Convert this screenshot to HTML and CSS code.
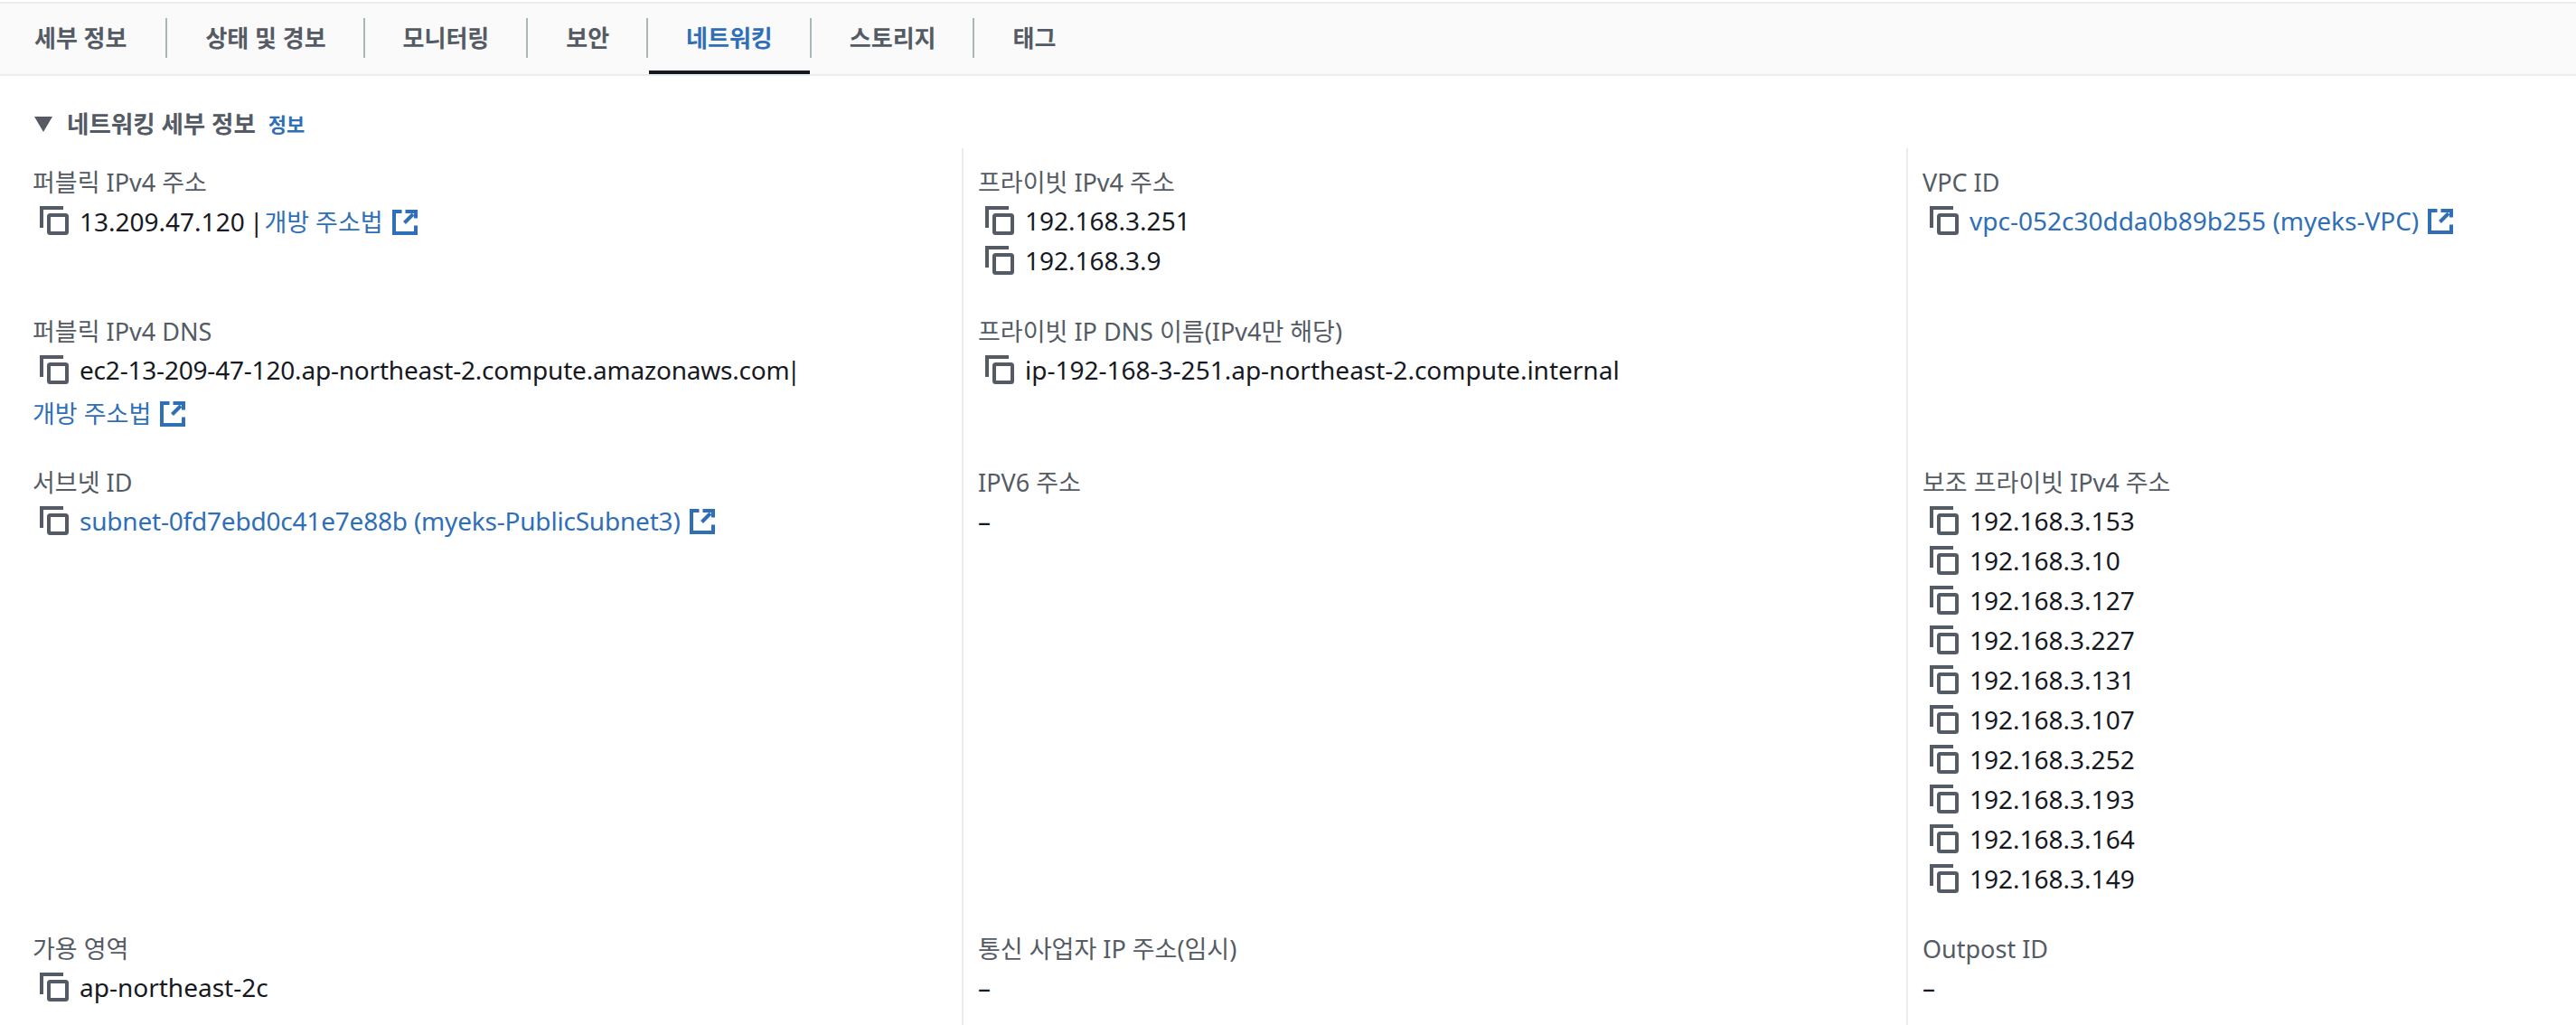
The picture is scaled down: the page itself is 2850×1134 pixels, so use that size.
FILE: index.html
```html
<!DOCTYPE html>
<html lang="ko">
<head>
<meta charset="utf-8">
<title>네트워킹</title>
<link rel="stylesheet" href="styles.css">
</head>
<body>
<svg class="defs" width="0" height="0" aria-hidden="true">
  <symbol id="copy" viewBox="0 0 32 32">
    <path d="M2 24V2H26" fill="none" stroke="#545b64" stroke-width="4"/>
    <rect x="10" y="10" width="20" height="20" rx="1.5" fill="none" stroke="#545b64" stroke-width="4"/>
  </symbol>
  <symbol id="ext" viewBox="0 0 28 28">
    <path d="M10.5 2H2V26H26V17.5M14.5 2H26V9.5" fill="none" stroke="#2f6fb7" stroke-width="4"/>
    <path d="M13.5 14.5L23 5" fill="none" stroke="#2f6fb7" stroke-width="4"/>
  </symbol>
</svg>
<nav class="tabs">
  <a class="tab first"><span class="tab-label">세부 정보</span></a>
  <a class="tab"><span class="tab-label">상태 및 경보</span></a>
  <a class="tab"><span class="tab-label">모니터링</span></a>
  <a class="tab"><span class="tab-label">보안</span></a>
  <a class="tab active"><span class="tab-label">네트워킹</span></a>
  <a class="tab"><span class="tab-label">스토리지</span></a>
  <a class="tab last"><span class="tab-label">태그</span></a>
</nav>
<section class="panel">
  <h2 class="heading"><span class="caret"></span><span>네트워킹 세부 정보</span><a class="info">정보</a></h2>
  <div class="grid">
    <div class="cell">
      <div class="label">퍼블릭 IPv4 주소</div>
      <div class="value"><svg class="copy"><use href="#copy"/></svg><span>13.209.47.120 <span class="sep">|</span><a class="link ko">개방 주소법<svg class="ext"><use href="#ext"/></svg></a></span></div>
    </div>
    <div class="cell">
      <div class="label">프라이빗 IPv4 주소</div>
      <div class="value"><svg class="copy"><use href="#copy"/></svg><span>192.168.3.251</span></div>
      <div class="value"><svg class="copy"><use href="#copy"/></svg><span>192.168.3.9</span></div>
    </div>
    <div class="cell">
      <div class="label">VPC ID</div>
      <div class="value"><svg class="copy"><use href="#copy"/></svg><a class="link">vpc-052c30dda0b89b255 (myeks-VPC)<svg class="ext"><use href="#ext"/></svg></a></div>
    </div>

    <div class="cell">
      <div class="label">퍼블릭 IPv4 DNS</div>
      <div class="value"><svg class="copy"><use href="#copy"/></svg><span class="tight">ec2-13-209-47-120.ap-northeast-2.compute.amazonaws.com<span class="pipe">|</span></span></div>
      <div class="value plain tall"><a class="link ko">개방 주소법<svg class="ext"><use href="#ext"/></svg></a></div>
    </div>
    <div class="cell">
      <div class="label">프라이빗 IP DNS 이름(IPv4만 해당)</div>
      <div class="value"><svg class="copy"><use href="#copy"/></svg><span>ip-192-168-3-251.ap-northeast-2.compute.internal</span></div>
    </div>
    <div class="cell"></div>

    <div class="cell">
      <div class="label">서브넷 ID</div>
      <div class="value"><svg class="copy"><use href="#copy"/></svg><a class="link tight">subnet-0fd7ebd0c41e7e88b (myeks-PublicSubnet3)<svg class="ext"><use href="#ext"/></svg></a></div>
    </div>
    <div class="cell">
      <div class="label">IPV6 주소</div>
      <div class="value plain">–</div>
    </div>
    <div class="cell">
      <div class="label">보조 프라이빗 IPv4 주소</div>
      <div class="value"><svg class="copy"><use href="#copy"/></svg><span>192.168.3.153</span></div>
      <div class="value"><svg class="copy"><use href="#copy"/></svg><span>192.168.3.10</span></div>
      <div class="value"><svg class="copy"><use href="#copy"/></svg><span>192.168.3.127</span></div>
      <div class="value"><svg class="copy"><use href="#copy"/></svg><span>192.168.3.227</span></div>
      <div class="value"><svg class="copy"><use href="#copy"/></svg><span>192.168.3.131</span></div>
      <div class="value"><svg class="copy"><use href="#copy"/></svg><span>192.168.3.107</span></div>
      <div class="value"><svg class="copy"><use href="#copy"/></svg><span>192.168.3.252</span></div>
      <div class="value"><svg class="copy"><use href="#copy"/></svg><span>192.168.3.193</span></div>
      <div class="value"><svg class="copy"><use href="#copy"/></svg><span>192.168.3.164</span></div>
      <div class="value"><svg class="copy"><use href="#copy"/></svg><span>192.168.3.149</span></div>
    </div>

    <div class="cell">
      <div class="label">가용 영역</div>
      <div class="value"><svg class="copy"><use href="#copy"/></svg><span>ap-northeast-2c</span></div>
    </div>
    <div class="cell">
      <div class="label">통신 사업자 IP 주소(임시)</div>
      <div class="value plain">–</div>
    </div>
    <div class="cell">
      <div class="label">Outpost ID</div>
      <div class="value plain">–</div>
    </div>
  </div>
</section>
</body>
</html>
```

FILE: styles.css
```css
* { box-sizing: border-box; }
html, body { margin: 0; padding: 0; height: 100%; overflow: hidden; background: #fff; }
body {
  font-family: "Noto Sans", "Noto Sans CJK KR", sans-serif;
  font-size: 28px;
  color: #16191f;
}
.defs { position: absolute; }

.tabs {
  display: flex;
  margin-top: 2px;
  height: 82px;
  padding: 16px 0 0;
  background: #fafafa;
  border-top: 2px solid #eaeded;
  border-bottom: 2px solid #eaeded;
}
.tab { position: relative; height: 44px; }
.tab-label {
  display: block;
  height: 44px;
  padding: 0 41px 0 42px;
  font-size: 26px;
  font-weight: 700;
  line-height: 44px;
  color: #545b64;
  border-right: 2px solid #aab7b8;
}
.tab.first .tab-label { padding: 0 43px 0 38px; }
.tab.last .tab-label { border-right: 0; }
.tab.active .tab-label { color: #2f6fb7; }
.tab.active::after {
  content: "";
  position: absolute;
  left: 1px;
  right: 2px;
  top: 58px;
  height: 4px;
  background: #16191f;
}

.panel { padding: 0 0 0 20px; }
.heading {
  display: flex;
  align-items: center;
  margin: 0;
  padding: 26px 0 0 18px;
  height: 80px;
  font-size: 26.5px;
  font-weight: 700;
  line-height: 44px;
  color: #545b64;
}
.caret {
  width: 0;
  height: 0;
  margin-right: 16px;
  border-left: 10px solid transparent;
  border-right: 10px solid transparent;
  border-top: 17px solid #545b64;
}
.info {
  margin-left: 14px;
  font-size: 22px;
  color: #2f6fb7;
}

.grid {
  display: grid;
  grid-template-columns: 1044px 1045px 1fr;
}
.cell {
  padding: 0 16px 36px 16px;
  border-left: 2px solid #eaeded;
}
.cell:nth-child(-n + 3) { padding-top: 18px; padding-bottom: 37px; }
.cell:nth-child(3n + 1) { border-left-color: transparent; margin-left: -2px; }
.label {
  height: 40px;
  font-size: 27px;
  line-height: 40px;
  color: #545b64;
}
.value {
  display: flex;
  align-items: center;
  height: 44px;
  padding-left: 8px;
  white-space: nowrap;
}
.value.plain { padding-left: 0; }
.value.tall { height: 47px; padding-top: 3px; }
.copy { flex: none; width: 32px; height: 32px; margin-right: 12px; }
.tight { letter-spacing: -0.2px; }
.pipe { margin-left: -3px; letter-spacing: 0; }
.sep { margin-right: 1px; margin-left: -2px; }
.link { color: #2f6fb7; }
.link.ko { font-size: 27px; }
.ext {
  width: 28px;
  height: 28px;
  margin-left: 10px;
  vertical-align: -4px;
}
```
